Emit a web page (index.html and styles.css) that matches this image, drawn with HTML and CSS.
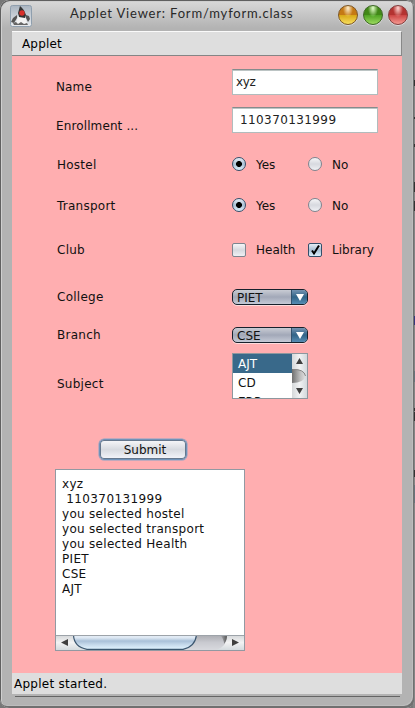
FILE: index.html
```html
<!DOCTYPE html>
<html lang="en">
<head>
<meta charset="utf-8">
<title>Applet Viewer: Form/myform.class</title>
<link rel="stylesheet" href="styles.css">
</head>
<body>
<div class="window">
  <header class="titlebar">
    <svg class="duke" width="22" height="22" viewBox="0 0 22 22">
      <defs><linearGradient id="tile" x2="0" y2="1"><stop stop-color="#a9b4c0"/><stop offset="1" stop-color="#e8ebee"/></linearGradient></defs>
      <rect x=".5" y=".5" width="21" height="21" rx="2" fill="url(#tile)" stroke="#8f9fae"/>
      <path d="M6 18Q8 11 9 9L14 10Q17 14 17 19L14 20L11 18L8 19Z" fill="#f3f3f3"/>
      <path d="M10 1Q14 4 16 10L15 13L9 12L8 8Z" fill="#333"/>
      <path d="M7 10L3 13L1 17L4 18L7 13M16 10L19 11L20 14L18 17L16 13" fill="#555"/>
      <circle cx="12" cy="8" r="2.700" fill="#d9302b"/>
      <path d="M3 18L6 17L8 19L11 17L14 19L17 18L18 20H4Z" fill="#666"/>
    </svg>
    <h1>Applet Viewer: Form/myform.class</h1>
    <div class="controls"><i class="orb amber"></i><i class="orb green"></i><i class="orb red"></i></div>
  </header>
  <nav class="menubar">Applet</nav>
  <main class="form">
    <div class="row text-row"><label class="low">Name</label><div class="field">xyz</div></div>
    <div class="row text-row"><label class="low lower">Enrollment ...</label><div class="field indent">110370131999</div></div>
    <div class="row hostel"><label>Hostel</label><span class="option"><i class="radio on"></i>Yes</span><span class="option"><i class="radio"></i>No</span></div>
    <div class="row transport"><label>Transport</label><span class="option"><i class="radio on"></i>Yes</span><span class="option"><i class="radio"></i>No</span></div>
    <div class="row club"><label>Club</label><span class="option"><i class="check"></i>Health</span><span class="option"><i class="check on"><svg width="15" height="15" viewBox="0 0 15 15"><path d="M4 7.5L6 10.5L11 2.5" fill="none" stroke="#000" stroke-width="2"/></svg></i>Library</span></div>
    <div class="row college"><label>College</label><div class="combo"><span>PIET</span><b><svg width="8" height="7"><path d="M0 0H8L4 7Z" fill="#fff"/></svg></b></div></div>
    <div class="row branch"><label>Branch</label><div class="combo"><span>CSE</span><b><svg width="8" height="7"><path d="M0 0H8L4 7Z" fill="#fff"/></svg></b></div></div>
    <div class="row subject"><label>Subject</label>
      <div class="list">
        <div class="items"><div class="item selected">AJT</div><div class="item">CD</div><div class="item">ERP</div></div>
        <svg class="vscroll" width="15" height="44" viewBox="0 0 15 44">
          <defs>
            <linearGradient id="vbar"><stop stop-color="#d5d8da"/><stop offset=".5" stop-color="#f1f2f3"/><stop offset="1" stop-color="#d2d8dc"/></linearGradient>
            <linearGradient id="vthumb"><stop stop-color="#707070"/><stop offset=".6" stop-color="#bdbdbd"/><stop offset="1" stop-color="#e0e0e0"/></linearGradient>
          </defs>
          <path d="M0 0H15V44H0Z" fill="url(#vbar)"/>
          <path d="M0 15Q12 15 13.500 22Q12 29 0 29Z" fill="url(#vthumb)"/>
          <path d="M1 15.500Q12 15 13.500 22" fill="none" stroke="#858585"/>
          <path d="M4 10H11L7.500 4ZM4 34H11L7.500 40Z" fill="#3f3f3f"/>
        </svg>
      </div>
    </div>
    <button class="submit">Submit</button>
    <div class="output">
<pre>xyz
<span class="number"> 110370131999</span>
you selected hostel
you selected transport
you selected Health
PIET
CSE
AJT</pre>
      <svg class="hscroll" width="188" height="15" viewBox="0 0 188 15">
        <defs>
          <linearGradient id="hbar" x2="0" y2="1"><stop stop-color="#d3d6d8"/><stop offset=".5" stop-color="#f2f2f3"/><stop offset="1" stop-color="#d4dade"/></linearGradient>
          <linearGradient id="track" x2="0" y2="1"><stop stop-color="#aaabb0"/><stop offset=".5" stop-color="#c9cad0"/><stop offset="1" stop-color="#d8d9de"/></linearGradient>
          <linearGradient id="hthumb" x2="0" y2="1"><stop stop-color="#e8eff7"/><stop offset=".2" stop-color="#dce7f2"/><stop offset=".42" stop-color="#a9c0d8"/><stop offset=".7" stop-color="#c9dced"/><stop offset="1" stop-color="#e2f4ff"/></linearGradient>
          <linearGradient id="edge"><stop stop-color="#555" stop-opacity="0"/><stop offset="1" stop-color="#555"/></linearGradient>
        </defs>
        <path d="M0 0H188V15H0Z" fill="url(#hbar)"/>
        <path d="M120 0H171Q171 12 160 15H120Z" fill="url(#track)"/>
        <path d="M164 0H171Q171 6 168 9Q168 4 164 0Z" fill="url(#edge)"/>
        <path d="M17.500 0Q18 12 31 14.300H127Q139 12 140.500 0Z" fill="url(#hthumb)"/>
        <path d="M17.500 0Q18 12 31 14.300H127Q139 12 140.500 0" fill="none" stroke="#3b566f" stroke-width="1.200"/>
        <path d="M0 .500H188" stroke="#9da3a9"/>
        <path d="M5 7.500L12 4V11ZM176 4V11L183 7.500Z" fill="#3f3f3f"/>
      </svg>
    </div>
  </main>
  <footer class="status">Applet started.</footer>
</div>
<svg class="backdrop" width="2" height="708" viewBox="0 0 2 708"><path d="M0 0H2V708H0Z" fill="#858585"/><path d="M1 80v6M1 117v2M1 144v3M1 182v10M1 201v10M1 408v3M1 412v9M1 470v7" stroke="#333" stroke-width="2"/><path d="M1 316v9" stroke="#37377c" stroke-width="2"/><path d="M1 371v11M1 485v18" stroke="#68737b" stroke-width="2"/></svg>
</body>
</html>
```

FILE: styles.css
```css
* { box-sizing: border-box; }
body { margin: 0; width: 415px; height: 708px; display: flex; overflow: hidden; background: #777; font: 12px/15px "DejaVu Sans", sans-serif; color: #111; }
.backdrop { flex: none; }
.window { flex: none; width: 415px; margin-right: -2px; height: 708px; padding: 0 12px; border-radius: 9px; position: relative; z-index: 1; background: linear-gradient(#dadada, #b3b3b3 28px); clip-path: inset(0 1px 0 0 round 7px); box-shadow: inset 1px 1px #606060, inset -2px -2px #707070, inset 2px 2px #cfcfcf, inset -3px -3px #bdbdbd; }
.titlebar { height: 31px; display: flex; align-items: flex-start; padding-top: 5px; margin: 0 -12px; padding-left: 10px; }
.duke { flex: none; }
h1 { font: 13px/18px Lato, sans-serif; margin: -1px 0 0 38px; width: 225px; color: #292929; white-space: nowrap; letter-spacing: .82px; }
.controls { display: flex; gap: 5px; margin-left: 43px; }
.orb { width: 20px; height: 20px; border-radius: 50%; border: 1px solid #777; box-shadow: 0 1px #ddd; }
.amber { background: radial-gradient(ellipse at 50% 12%, #fff0d0, transparent 40%), linear-gradient(#c57914 48%, #d9a817 52%, #f7df60); border-color: #7b5525; }
.green { background: radial-gradient(ellipse at 50% 12%, #e3ffc9, transparent 40%), linear-gradient(#418817 48%, #51a424 52%, #9cda60); border-color: #3d6625; }
.red { background: radial-gradient(ellipse at 50% 12%, #ffd4d1, transparent 40%), linear-gradient(#b43331 48%, #cd4645 52%, #f59a92); border-color: #823d3d; }
.menubar { height: 25px; padding: 5px 10px 0; background: #dedede; border-top: 1px solid #fafafa; border-right: 1px solid #888; border-bottom: 1px solid #858585; color: #000; width: 390px; letter-spacing: .15px; }
.form { width: 390px; height: 617px; background: #ffaeb0; padding: 13px 0 0 44px; display: flex; flex-direction: column; align-items: flex-start; }
.row { display: flex; align-items: center; height: 16px; flex: none; white-space: nowrap; }
.row label { width: 175px; padding-left: 1px; margin-right: 1px; letter-spacing: .25px; }
.row .low { position: relative; top: 5px; padding-left: 0; letter-spacing: .12px; }
.row .lower { top: 6px; }
.text-row { height: 26px; margin-bottom: 12px; }
.field { width: 146px; height: 26px; background: #fff; border: 1px solid #b1bcbd; border-top-color: #858b8c; box-shadow: inset 0 1px #bcc4c4; padding: 5px 3px; color: #222; }
.field:not(.indent) { letter-spacing: -.4px; }
.indent { padding-left: 7px; letter-spacing: .4px; }
.number { letter-spacing: .4px; }
.hostel { margin-top: 12px; }
.transport { margin-top: 25px; }
.club { margin-top: 28px; }
.college { margin-top: 31px; }
.branch { margin-top: 22px; }
.option { width: 76px; display: flex; align-items: center; }
.radio, .check { width: 14px; height: 14px; margin-right: 10px; flex: none; border: 1px solid #7d858f; background: linear-gradient(#f5f5f7, #d7d9df 50%, #eff0f4); }
.radio { border-radius: 50%; position: relative; top: -1px; }
.radio.on { border-color: #344f6a; background: radial-gradient(circle, #000 2.6px, transparent 3.3px), linear-gradient(#e6edf5, #a9bfd3 50%, #dbedfa); }
.check { border-radius: 2px; }
.check.on { border-color: #344f6a; background: linear-gradient(#e6edf5, #a9bfd3 50%, #dbedfa); }
.check svg { display: block; margin: -1px; overflow: visible; }
.combo { width: 76px; height: 16px; border: 1px solid #17212c; border-radius: 5px; display: flex; overflow: hidden; background: linear-gradient(#c9ccd4, #a2a8b8 50%, #c5cad6); box-shadow: 0 1px #ffdcdd; line-height: 15px; }
.combo span { width: 58px; padding: 1px 0 0 4px; }
.combo b { flex: 1; background: linear-gradient(#7593b1, #326488 50%, #568cb3); border-left: 1px solid #34536f; display: flex; align-items: center; justify-content: center; }
.subject { height: 46px; margin-top: 10px; }
.subject label { padding-top: 16px; }
.list { width: 76px; height: 46px; border: 1px solid #8d979e; display: flex; overflow: hidden; background: #fff; }
.items { width: 59px; height: 44px; overflow: hidden; }
.item { height: 19px; padding: 3px 5px 1px; }
.selected { background: #39698a; color: #fff; }
.vscroll { flex: none; }
.submit { width: 88px; height: 21px; margin: 40px 0 9px 43px; padding: 1px 0 0 4px; border: 1px solid #6f93b9; border-radius: 5px; box-shadow: inset 0 0 0 1px #66788e, 0 0 0 .5px #83a3c7; background: linear-gradient(#f8f8fa, #d7dae0 50%, #f4f5fb); font: inherit; color: #111; }
.output { width: 190px; height: 182px; margin-left: -1px; border: 1px solid #9299a2; background: #fff; display: flex; flex-direction: column; }
pre { margin: 0; padding: 7px 6px 0; flex: 1; font: inherit; letter-spacing: .3px; }
.hscroll { flex: none; }
.status { width: 390px; height: 21px; padding: 4px 2px; background: #dedede; color: #000; letter-spacing: .25px; }
.window::after { content: ""; display: block; height: 1px; background: #656565; margin: 2px 3px 0; }
```
